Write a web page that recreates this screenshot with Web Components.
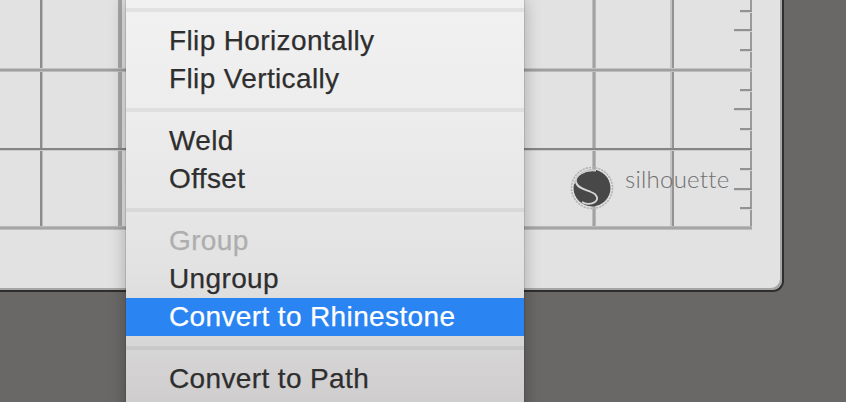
<!DOCTYPE html>
<html><head><meta charset="utf-8"><style>
html,body{margin:0;padding:0;background:#696866;}
body{width:846px;height:402px;overflow:hidden;}
</style></head><body>
<cut-stage>
  <cut-mat><cut-logo>silhouette</cut-logo></cut-mat>
  <pop-menu>
    <menu-sep></menu-sep>
    <menu-item>Flip Horizontally</menu-item>
    <menu-item>Flip Vertically</menu-item>
    <menu-sep></menu-sep>
    <menu-item>Weld</menu-item>
    <menu-item>Offset</menu-item>
    <menu-sep></menu-sep>
    <menu-item disabled>Group</menu-item>
    <menu-item>Ungroup</menu-item>
    <menu-item active>Convert to Rhinestone</menu-item>
    <menu-sep></menu-sep>
    <menu-item>Convert to Path</menu-item>
  </pop-menu>
</cut-stage>
<script>
function def(name,css,html){
  customElements.define(name,class extends HTMLElement{
    constructor(){super();const r=this.attachShadow({mode:'open'});r.innerHTML='<style>'+css+'</style>'+html;}
  });
}
def('cut-stage',':host{display:block;position:relative;width:846px;height:402px;overflow:hidden;background:#696866}','<slot></slot>');
const V=[[40,2,'#8c8c8c'],[42,1,'#bcbcbc'],[118,4,'#a6a6a6'],[592,1,'#bdbdbd'],[593,2,'#a2a2a2'],[595,1,'#b8b8b8'],[670,2,'#c4c4c4'],[672,2,'#939393'],[750,2,'#9a9a9a']];
const H=[[68,1,'#c2c2c2'],[69,2,'#a0a0a0'],[71,1,'#bcbcbc'],[148,2,'#858585'],[150,1,'#cacaca'],[226,1,'#b8b8b8'],[227,2,'#a6a6a6'],[229,1,'#bcbcbc']];
const T=[[11,740],[30,734],[50,740],[90,740],[109,734],[129,740],[169,740],[189,734],[208,740]];
let g='';
V.forEach(v=>g+=`<rect x="${v[0]}" y="0" width="${v[1]}" height="229" fill="${v[2]}"/>`);
H.forEach(h=>g+=`<rect x="0" y="${h[0]}" width="752" height="${h[1]}" fill="${h[2]}"/>`);
T.forEach(t=>g+=`<rect x="${t[1]}" y="${t[0]-1}" width="${752-t[1]}" height="2" fill="#929292"/><rect x="${t[1]}" y="${t[0]+1}" width="${752-t[1]}" height="1" fill="#d2d2d2"/>`);
def('cut-mat',`:host{display:block;position:relative;box-sizing:border-box;width:784px;height:292px;background:#e2e2e2;border-right:2px solid #2e2e2e;border-bottom:2px solid #2e2e2e;border-bottom-right-radius:11px;box-shadow:inset -2px -2px 0 #a6a6a6}
svg{display:block;position:absolute;left:0;top:0}`,`<svg width="782" height="290" viewBox="0 0 782 290">${g}</svg><slot></slot>`);
def('cut-logo',`:host{position:absolute;left:570px;top:166px;display:flex;align-items:center;gap:11px;font:300 24px/30px Lato,"Open Sans",sans-serif;color:#6f6f6f;letter-spacing:.25px}
span{position:relative;top:-9px}svg{display:block}`,`<svg width="44" height="44" viewBox="0 0 44 44"><circle cx="22" cy="22" r="20.5" fill="none" stroke="#b4b4b4" stroke-width="1.6" stroke-dasharray="2.2 1"/><circle cx="22" cy="22" r="18.5" fill="#484848"/><path d="M26 4.5C14 3 4.5 10 6 16C7 22 16 24 21 26C27 28 29 33 25 36C21 39 15 38 12 36" fill="none" stroke="#d6d6d6" stroke-width="1.8"/><path d="M22 3.5C13 3.5 4 10 3.5 20C3.5 20 4 18 6 16C5 10 14 3.5 26 4.5z" fill="#c8c8c8"/></svg><span><slot></slot></span>`);
def('pop-menu',`:host{position:absolute;left:126px;top:0;box-sizing:border-box;width:398px;height:420px;padding-top:8px;display:flex;flex-direction:column;background:linear-gradient(#f1f1f1 0,#ededed 110px,#e2e2e2 270px,#cfcdcd 402px);box-shadow:0 0 16px rgba(0,0,0,.28),0 0 1px 0 rgba(0,0,0,.55)}`,'<slot></slot>');
def('menu-sep',`:host{display:block;height:4px;margin-bottom:10px;background:rgba(0,0,0,.06)}
:host(:not(:first-child)){margin-top:10px}`,'');
def('menu-item',`:host{display:block;height:38px;line-height:37px;padding-left:43px;font-family:"Liberation Sans",Arial,sans-serif;font-size:28px;letter-spacing:.37px;-webkit-text-stroke:.25px currentColor;color:#2e2e2e;white-space:nowrap}
:host([disabled]){color:#aeaeae}
:host([active]){background:#2a84f2;color:#fff}`,'<slot></slot>');
</script></body></html>
